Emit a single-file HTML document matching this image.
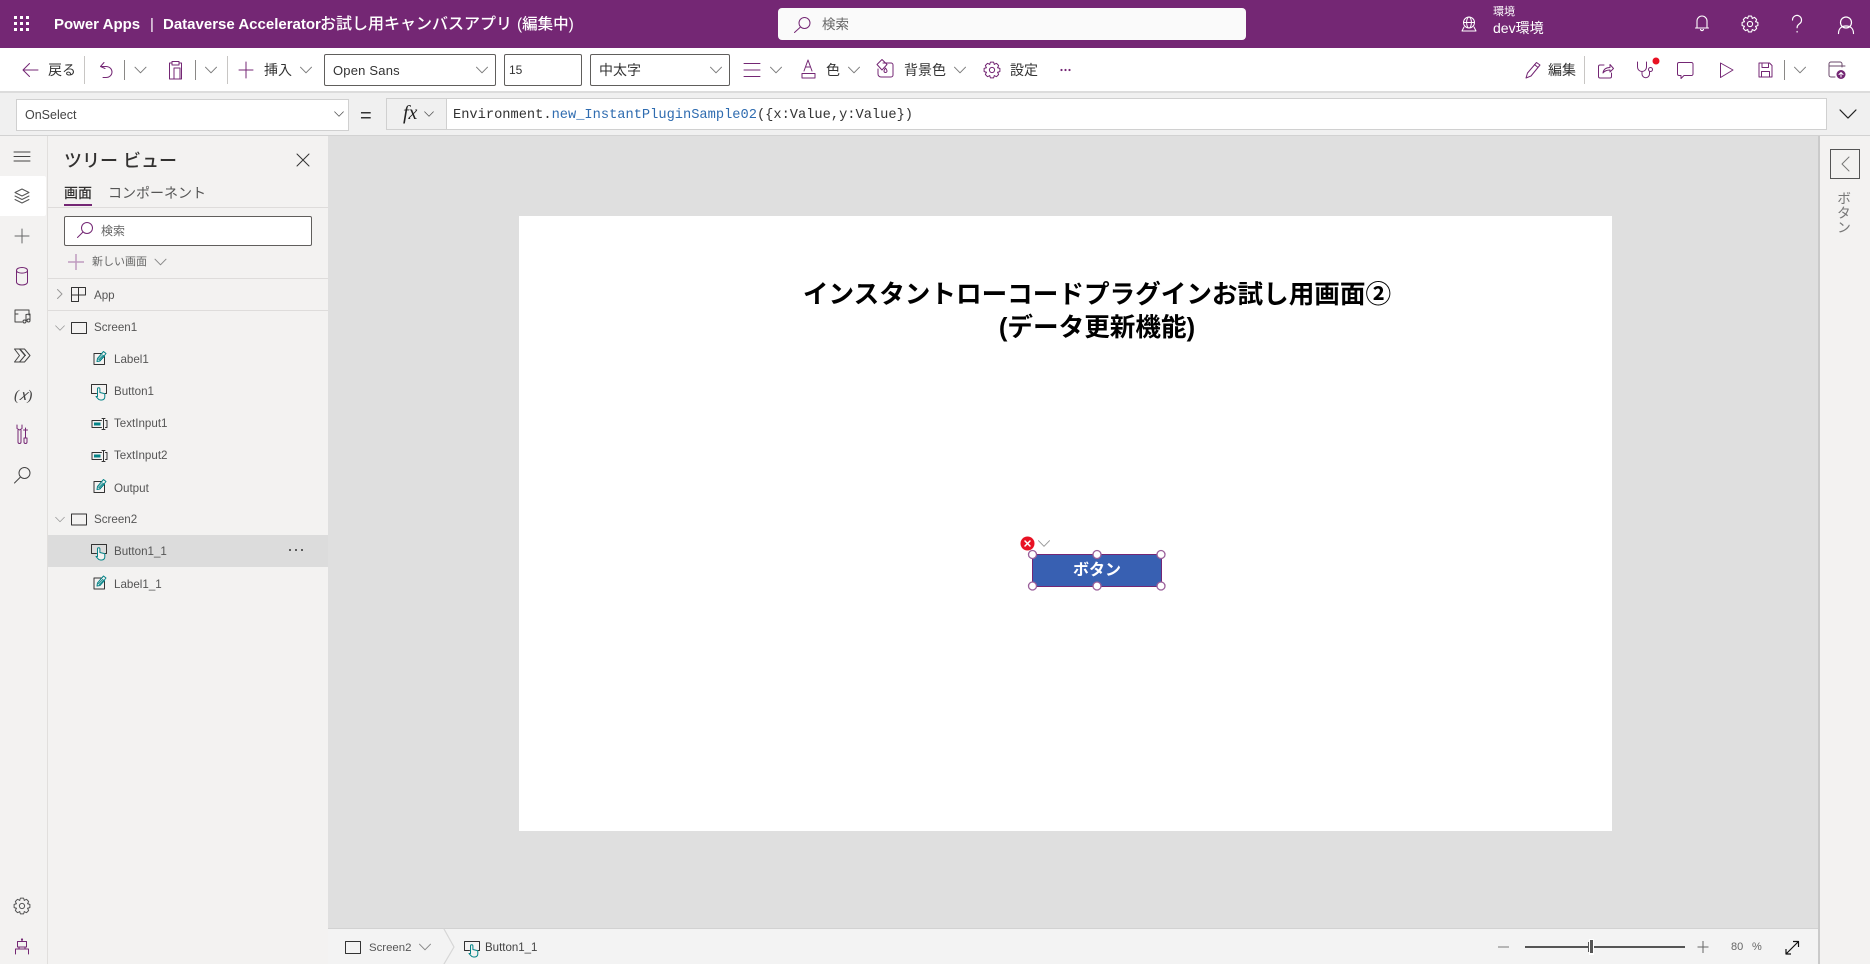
<!DOCTYPE html>
<html lang="ja"><head><meta charset="utf-8"><title>Power Apps</title>
<style>
html,body{margin:0;padding:0;width:1870px;height:964px;overflow:hidden;background:#dfdfdf;font-family:"Liberation Sans","Noto Sans CJK JP",sans-serif;color:#333}
.b{position:absolute;box-sizing:border-box}
.t{position:absolute;white-space:nowrap;line-height:20px;font-size:13px}
.w{color:#fff}
.tr{font-size:11.6px;color:#555}
svg{position:absolute;left:0;top:0}
</style></head><body>
<!-- backgrounds -->
<div class="b" style="left:0;top:0;width:1870px;height:48px;background:#742774"></div>
<div class="b" style="left:0;top:48px;width:1870px;height:45px;background:#fff;border-bottom:2px solid #dcdcdc"></div>
<div class="b" style="left:0;top:93px;width:1870px;height:43px;background:#f0f0f0;border-bottom:1px solid #d2d2d2"></div>
<div class="b" style="left:0;top:136px;width:48px;height:828px;background:#f3f2f1;border-right:1px solid #e1dfdd"></div>
<div class="b" style="left:0;top:176px;width:46px;height:40px;background:#fff;border-radius:0 2px 2px 0"></div>
<div class="b" style="left:48px;top:136px;width:280px;height:828px;background:#f3f2f1"></div>
<div class="b" style="left:48px;top:535px;width:280px;height:32px;background:#dcdcdc"></div>
<div class="b" style="left:48px;top:207px;width:280px;height:1px;background:#dedcdb"></div>
<div class="b" style="left:48px;top:278px;width:280px;height:1px;background:#dedcdb"></div>
<div class="b" style="left:48px;top:310px;width:280px;height:1px;background:#dedcdb"></div>
<div class="b" style="left:328px;top:136px;width:1491px;height:792px;background:#dfdfdf"></div>
<div class="b" style="left:519px;top:216px;width:1093px;height:615px;background:#fff"></div>
<div class="b" style="left:328px;top:928px;width:1491px;height:36px;background:#f3f3f3;border-top:1px solid #d2d2d2"></div>
<div class="b" style="left:1818px;top:136px;width:52px;height:828px;background:#f3f2f1;border-left:2px solid #cacaca"></div>
<!-- header -->
<div class="b" style="left:778px;top:8px;width:468px;height:32px;background:#fafafa;border-radius:4px"></div>
<div class="t w" style="left:54px;top:15px;font-size:15px;font-weight:700">Power Apps</div>
<div class="t w" style="left:150px;top:15px;font-size:15px;font-weight:400">|</div>
<div class="t w" style="left:163px;top:15px;font-size:15px;font-weight:700">Dataverse Accelerator</div>
<div class="t w" style="left:320px;top:15px;font-size:16px;font-weight:500">お試し用キャンバスアプリ</div>
<div class="t w" style="left:517px;top:15px;font-size:15.5px;font-weight:500">(編集中)</div>
<div class="t" style="left:822px;top:15px;font-size:13.5px;color:#666">検索</div>
<div class="t w" style="left:1493px;top:2px;font-size:11px">環境</div>
<div class="t w" style="left:1493px;top:18px;font-size:14px">dev環境</div>
<!-- toolbar -->
<div class="t" style="left:48px;top:60px;font-size:14px">戻る</div>
<div class="t" style="left:264px;top:60px;font-size:14px">挿入</div>
<div class="b" style="left:324px;top:54px;width:172px;height:32px;background:#fff;border:1px solid #605e5c;border-radius:2px"></div>
<div class="t" style="left:333px;top:61px;font-size:13px;letter-spacing:.2px">Open Sans</div>
<div class="b" style="left:504px;top:54px;width:78px;height:32px;background:#fff;border:1px solid #605e5c;border-radius:2px"></div>
<div class="t" style="left:509px;top:60px;font-size:12px">15</div>
<div class="b" style="left:590px;top:54px;width:140px;height:32px;background:#fff;border:1px solid #605e5c;border-radius:2px"></div>
<div class="t" style="left:599px;top:60px;font-size:14px">中太字</div>
<div class="t" style="left:826px;top:60px;font-size:14px">色</div>
<div class="t" style="left:904px;top:60px;font-size:14px">背景色</div>
<div class="t" style="left:1010px;top:60px;font-size:14px">設定</div>
<div class="t" style="left:1548px;top:60px;font-size:14px">編集</div>
<!-- formula bar -->
<div class="b" style="left:16px;top:99px;width:333px;height:32px;background:#fff;border:1px solid #d0d0d0"></div>
<div class="t" style="left:25px;top:105px;font-size:12.5px;color:#444">OnSelect</div>
<div class="t" style="left:360px;top:106px;font-size:20px;color:#333">=</div>
<div class="b" style="left:386px;top:98px;width:61px;height:32px;background:#f0f0f0;border:1px solid #d0d0d0"></div>
<div class="t" style="left:403px;top:103px;font-size:20px;font-style:italic;font-family:'Liberation Serif',serif;color:#222">fx</div>
<div class="b" style="left:447px;top:98px;width:1380px;height:32px;background:#fff;border:1px solid #d0d0d0;border-left:0"></div>
<div class="t" style="left:453px;top:106px;font-family:'Liberation Mono',monospace;font-size:13.7px;color:#333">Environment.<span style="color:#2f6cb0">new_InstantPluginSample02</span>({x:Value,y:Value})</div>
<!-- tree panel -->
<div class="t" style="left:64px;top:151px;font-size:18px;font-weight:500;color:#323130">ツリー ビュー</div>
<div class="t" style="left:64px;top:183px;font-size:14px;font-weight:500;color:#323130">画面</div>
<div class="b" style="left:64px;top:204px;width:28px;height:2px;background:#742774"></div>
<div class="t" style="left:108px;top:183px;font-size:14px;color:#555">コンポーネント</div>
<div class="b" style="left:64px;top:216px;width:248px;height:30px;background:#fff;border:1px solid #605e5c;border-radius:2px"></div>
<div class="t" style="left:101px;top:221px;font-size:12px;color:#666">検索</div>
<div class="t" style="left:92px;top:252px;font-size:11px;color:#666">新しい画面</div>
<div class="t tr" style="left:94px;top:286px">App</div>
<div class="t tr" style="left:94px;top:318px">Screen1</div>
<div class="t tr" style="left:114px;top:350px">Label1</div>
<div class="t tr" style="left:114px;top:382px">Button1</div>
<div class="t tr" style="left:114px;top:414px">TextInput1</div>
<div class="t tr" style="left:114px;top:446px">TextInput2</div>
<div class="t tr" style="left:114px;top:479px">Output</div>
<div class="t tr" style="left:94px;top:510px">Screen2</div>
<div class="t tr" style="left:114px;top:542px">Button1_1</div>
<div class="t tr" style="left:114px;top:575px">Label1_1</div>
<!-- canvas -->
<div class="t" style="left:519px;width:1156px;top:279px;font-size:25.6px;line-height:33px;font-weight:700;text-align:center;color:#000">インスタントローコードプラグインお試し用画面②<br>(データ更新機能)</div>
<div class="b" style="left:1032px;top:554px;width:130px;height:33px;background:#3860b2;border:1px solid #742774"></div>
<div class="t w" style="left:1032px;width:130px;top:561px;font-size:16px;font-weight:700;text-align:center">ボタン</div>
<!-- right panel -->
<div class="b" style="left:1830px;top:149px;width:30px;height:30px;border:1px solid #555"></div>
<div class="t" style="left:1837px;top:191px;font-size:14px;line-height:14px;letter-spacing:.5px;writing-mode:vertical-rl;color:#777">ボタン</div>
<!-- bottom -->
<div class="t" style="left:369px;top:938px;font-size:11.4px;color:#555">Screen2</div>
<div class="t" style="left:485px;top:938px;font-size:11.5px;color:#444">Button1_1</div>
<div class="t" style="left:1731px;top:937px;font-size:11px;color:#666">80</div>
<div class="t" style="left:1752px;top:937px;font-size:11px;color:#666">%</div>

<svg width="1870" height="964" viewBox="0 0 1870 964" fill="none" stroke-linecap="round" stroke-linejoin="round">
<defs>
<g id="gear"><circle r="2.6"/>
<path id="tth" d="M-2.4 -5.6L-1.5 -7.9H1.5L2.4 -5.6"/>
<use href="#tth" transform="rotate(45)"/><use href="#tth" transform="rotate(90)"/><use href="#tth" transform="rotate(135)"/><use href="#tth" transform="rotate(180)"/><use href="#tth" transform="rotate(225)"/><use href="#tth" transform="rotate(270)"/><use href="#tth" transform="rotate(315)"/>
</g>
<g id="chev"><path d="M-5.5 -2.8L0 2.8L5.5 -2.8"/></g>
<g id="lbl"><path stroke="#333" d="M11 3.5V11.5H.5V.5H8"/><path stroke="#038387" d="M3.5 8.5L4 5.5L10 -1.5L12.5 .5L6.5 8Z"/><path stroke="#038387" d="M5 6L7 7.5M6 5L8 6.5M7 4L9 5.5M8 3L10 4.5M9 2L11 3.5"/></g>
<g id="btn"><path stroke="#333" d="M5.5 9.5H.5V.5H15.5V9.5H14"/><path stroke="#038387" fill="#f3f2f1" d="M6.5 12.5V5a1.2 1.2 0 0 1 2.4 0V8.5L13 9.5a1 1 0 0 1 .8 1V13a3 3 0 0 1-3 3H9.5a3 3 0 0 1-2.4-1.2L5 12.5Z"/></g>
<g id="inp"><path stroke="#333" d="M10 .5H.5V7.5H10M14 .5H15.5V7.5H14"/><path fill="#038387" stroke="none" d="M2.5 2.5H9V5.5H2.5Z"/><path stroke="#333" d="M10.5 -1.5H13.5M12 -1.5V9.5M10.5 9.5H13.5"/></g>
</defs>

<!-- header icons -->
<g fill="#fff"><rect x="14" y="16" width="3" height="3"/><rect x="20" y="16" width="3" height="3"/><rect x="26" y="16" width="3" height="3"/><rect x="14" y="22" width="3" height="3"/><rect x="20" y="22" width="3" height="3"/><rect x="26" y="22" width="3" height="3"/><rect x="14" y="28" width="3" height="3"/><rect x="20" y="28" width="3" height="3"/><rect x="26" y="28" width="3" height="3"/></g>
<g stroke="#742774" stroke-width="1"><circle cx="804.5" cy="23" r="5.5"/><path d="M800.5 27L794.5 32.5"/></g>
<g stroke="#fff" stroke-width="1"><circle cx="1469" cy="22.5" r="5.5"/><ellipse cx="1469" cy="22.5" rx="2.4" ry="5.5"/><path d="M1463.5 22.5H1474.5M1462 31H1476L1474 27M1464 27L1462 31"/></g>
<g stroke="#fff" stroke-width="1.1"><path d="M1697 28V21a5 5 0 0 1 10 0V28ZM1695.5 28H1708.5M1700.5 29.5a1.6 1.6 0 0 0 3 0"/></g>
<use href="#gear" transform="translate(1750 24)" stroke="#fff" stroke-width="1.1"/>
<path stroke="#fff" stroke-width="1.2" d="M1792.5 20a4.5 4.5 0 1 1 7 3.7c-1.5 1-2.4 2-2.4 4M1797.1 31.5V32"/>
<g stroke="#fff" stroke-width="1.2"><circle cx="1846" cy="22.5" r="5.5"/><path d="M1838.5 33.5c0-5 3-7.5 7.5-7.5s7.5 2.5 7.5 7.5"/></g>

<!-- toolbar icons -->
<g stroke="#742774" stroke-width="1">
<path d="M38 70H23M29.5 63.5L23 70L29.5 76.5"/>
<path d="M104 62.5L100.5 66.5L105 68.5M101 66.5H106c3.5 0 6 2.5 6 5.5s-2.5 5.5-6 5.5H103"/>
<path d="M172 63H169.500V79H181.500V63H179M172 61.500H179V65H172ZM174 68H180V79H174Z"/>
<path d="M246 62V78M239 70H253"/>
<path d="M744 63.5H760M744 70H760M744 76.5H760"/>
<path d="M804 71L808 60L812 71M805.5 67H810.5M802 73.5H815V78H802Z"/>
<path d="M883 63h8a2 2 0 0 1 2 2v10a2 2 0 0 1-2 2H881a3 3 0 0 1-3-3V69"/><path d="M877 64.5L882 59.5L887 64.5L882 70Z M885.5 68c1 1.500 1.500 2.300 1.500 3a1.500 1.500 0 0 1-3 0c0-.7.5-1.500 1.500-3Z"/>
<use href="#gear" transform="translate(992 70)"/>
<path d="M1526 78L1527.5 73L1536.5 62.5L1540 65L1531 76Z M1534.5 64.5L1538 67.5"/>
<path d="M1604 65H1600a1.5 1.5 0 0 0-1.5 1.5V76.5a1.5 1.5 0 0 0 1.5 1.5H1610a1.5 1.5 0 0 0 1.5-1.5V73M1603 73c.5-3.500 3-5.500 7-5.500V64.500L1613.500 68.500L1610 72V70c-3 0-5.500 1-7 3Z"/>
<path d="M1637.500 62V67a4.500 4.500 0 0 0 9 0V62M1642 71.500V74a3.500 3.500 0 0 0 7.500 0V71.500"/><circle cx="1650.500" cy="69.500" r="2"/>
<path d="M1679 62.500H1691.500a1.500 1.500 0 0 1 1.500 1.500V74a1.500 1.500 0 0 1-1.500 1.500H1684L1681 78.500V75.500H1679a1.500 1.500 0 0 1-1.500-1.500V64a1.500 1.500 0 0 1 1.500-1.500Z"/>
<path d="M1720.500 63L1733 70L1720.500 77.500Z"/>
<path d="M1759 63H1769.500L1772 65.500V77H1759ZM1762 63V67.500H1768.500V63M1761.500 77V71.500H1769.500V77"/>
<path d="M1842 67V64a2 2 0 0 0-2-2H1831a2 2 0 0 0-2 2V75a2 2 0 0 0 2 2H1835M1829 66H1845" stroke="#6b4a6b"/>
</g>
<circle cx="1656" cy="61" r="3.500" fill="#e81123"/>
<circle cx="1841" cy="74.500" r="4.500" fill="#742774"/><path stroke="#fff" d="M1841 77V72.500M1839 74.500L1841 72.500L1843 74.500"/>
<!-- separators -->
<g stroke="#c8c6c4" stroke-width="1" stroke-linecap="butt"><path d="M84.500 56V84M227.500 56V84M1584.500 56V84"/></g>
<g stroke="#8a8886" stroke-width="1" stroke-linecap="butt"><path d="M124.500 60V80M195.500 60V80M1784.500 60V80"/></g>
<!-- chevrons toolbar -->
<g stroke="#7a7a7a" stroke-width="1">
<use href="#chev" transform="translate(140.500 70)"/><use href="#chev" transform="translate(211 70)"/><use href="#chev" transform="translate(306 70)"/>
<use href="#chev" transform="translate(482 70)"/><use href="#chev" transform="translate(716 70)"/>
<use href="#chev" transform="translate(776 70)"/><use href="#chev" transform="translate(854 70)"/><use href="#chev" transform="translate(960 70)"/><use href="#chev" transform="translate(1800 70)"/>
</g>
<g fill="#742774"><circle cx="1061.500" cy="70" r="1.100"/><circle cx="1065.500" cy="70" r="1.100"/><circle cx="1069.500" cy="70" r="1.100"/></g>
<!-- formula chevrons -->
<use href="#chev" transform="translate(339 114) scale(.8)" stroke="#555"/>
<use href="#chev" transform="translate(429 114) scale(.8)" stroke="#555"/>
<use href="#chev" transform="translate(1848 114) scale(1.450)" stroke="#222" stroke-width=".8"/>

<!-- rail icons -->
<g stroke="#444" stroke-width="1">
<path d="M14 152H30M14 156.500H30M14 161H30"/>
<path stroke="#555" d="M22 189L29 192.500L22 196L15 192.500ZM15 196L22 199.500L29 196M15 199.500L22 203L29 199.500"/>
<path stroke="#666" d="M22 229V243M15 236H29"/>
<path stroke="#742774" d="M16.500 270.500C16.500 266.500 27.500 266.500 27.500 270.500V282C27.500 286 16.500 286 16.500 282ZM16.500 270.500C16.500 274 27.500 274 27.500 270.500"/>
<path d="M15 310H29V315M15 310V322H22M15 314H18M26 321V314.500L30 314V320"/><circle cx="24.500" cy="321.500" r="1.500"/><circle cx="28.500" cy="320.500" r="1.500"/>
<path d="M14.500 349H24.500L30 355.500L24.500 362H14.500L19.500 355.500ZM19.500 349L25 355.500L19.500 362M20 349L25.500 355.500"/>
<circle cx="24.500" cy="473" r="5.500"/><path d="M20.500 477L14.500 483"/>
<path stroke="#742774" d="M18 430V442a1.500 1.500 0 0 0 3 0V430M17 425V428.500L19.500 430L22 428.500V425M24 438V442a1.500 1.500 0 0 0 3 0V438H24M25.500 438V428M23.500 430H27.500"/>
<use href="#gear" transform="translate(22 906)" stroke="#555"/>
<path stroke="#742774" d="M17.500 941.500H26.500V947H17.500ZM22 941.500V940"/><circle cx="22" cy="939.500" r="1.100" fill="#742774" stroke="none"/>
<path stroke="#742774" d="M15.500 954V949H28.500V954M19 949V947M25 949V947"/>
</g>
<text x="14" y="400" font-family="'Liberation Serif',serif" font-style="italic" font-size="15" fill="#444" stroke="none">(𝑥)</text>

<!-- tree icons -->
<path stroke="#333" d="M297 154L309 166M309 154L297 166"/>
<g stroke="#742774" stroke-width="1"><circle cx="87" cy="228" r="5.500"/><path d="M83 232L77.500 237.500"/></g>
<path stroke="#c09bc0" stroke-width="1.500" stroke-linecap="butt" d="M76 254V270M68 262H84"/>
<use href="#chev" transform="translate(160.500 262)" stroke="#888"/>
<path stroke="#999" d="M57.500 289.500L62 294L57.500 298.500"/>
<path stroke="#333" stroke-linecap="butt" d="M71.500 287.500H85.500V295H78.500V301.500H71.500ZM71.500 295H78.500M78.500 287.500V295"/>
<use href="#chev" transform="translate(60 328) scale(.8)" stroke="#999"/>
<rect x="71.500" y="322.500" width="15" height="11" stroke="#333"/>
<use href="#chev" transform="translate(60 519.500) scale(.8)" stroke="#999"/>
<rect x="71.500" y="514" width="15" height="11" stroke="#333"/>
<use href="#lbl" transform="translate(93.500 353)"/>
<use href="#btn" transform="translate(91 384)"/>
<use href="#inp" transform="translate(91.500 420)"/>
<use href="#inp" transform="translate(91.500 452)"/>
<use href="#lbl" transform="translate(93.500 481)"/>
<use href="#btn" transform="translate(91 544)"/>
<use href="#lbl" transform="translate(93.500 577.500)"/>
<g fill="#333"><circle cx="290" cy="550" r="1"/><circle cx="296" cy="550" r="1"/><circle cx="302" cy="550" r="1"/></g>

<!-- selection handles -->
<g fill="#fff" stroke="#9a5f9a" stroke-width="1.300"><circle cx="1032.500" cy="554.500" r="4"/><circle cx="1097" cy="554.500" r="4"/><circle cx="1161" cy="554.500" r="4"/><circle cx="1032.500" cy="586" r="4"/><circle cx="1097" cy="586" r="4"/><circle cx="1161" cy="586" r="4"/></g>
<circle cx="1027.500" cy="543.500" r="7" fill="#e81123"/><path stroke="#fff" stroke-width="1.500" d="M1025 541L1030 546M1030 541L1025 546"/>
<use href="#chev" transform="translate(1044 543.500)" stroke="#999"/>

<!-- right panel chevron -->
<path stroke="#777" d="M1849 157L1842 164L1849 171"/>

<!-- bottom icons -->
<rect x="345.500" y="941.500" width="15" height="12" stroke="#333"/>
<use href="#chev" transform="translate(425 947)" stroke="#888"/>
<path stroke="#d6d6d6" stroke-width="1.200" d="M444 929L454 947L444 964"/>
<use href="#btn" transform="translate(464 941)"/>
<g stroke-linecap="butt">
<path stroke="#7a7a7a" d="M1498 947H1509"/>
<path stroke="#555" stroke-width="2" d="M1525 947H1685"/>
<path stroke="#fff" stroke-width="5" d="M1591.500 939V955"/>
<path stroke="#555" stroke-width="3" d="M1591.500 940V953"/>
<path stroke="#555" d="M1588.500 942V952"/>
<path stroke="#666" d="M1703 941V953M1697.500 947H1708.500"/>
<path stroke="#111" stroke-width="1.200" d="M1786 954L1798 942M1786 949V954H1791M1793 941.500H1798.500V947"/>
</g>
</svg>
</body></html>
